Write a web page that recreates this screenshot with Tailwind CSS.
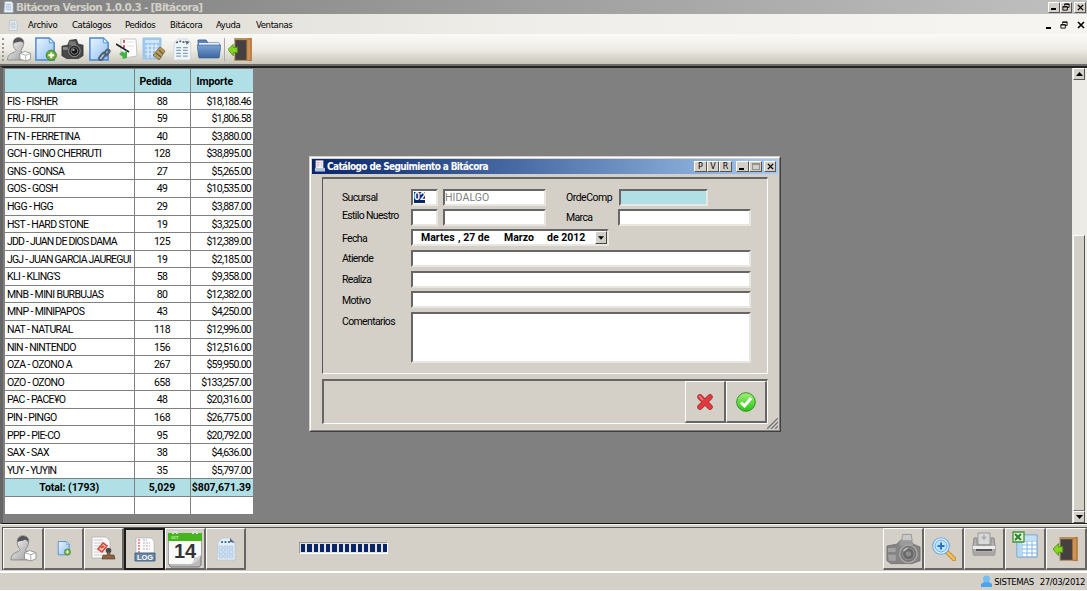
<!DOCTYPE html>
<html lang="es">
<head>
<meta charset="utf-8">
<title>Bitácora Version 1.0.0.3</title>
<script src="https://cdn.jsdelivr.net/npm/@tailwindcss/browser@4"></script>
</head>
<body class="w-[1087px] h-[591px] overflow-hidden bg-[#d4d0c8] font-['Roboto','Liberation_Sans',sans-serif] text-[11px] leading-none text-black">
<svg width="0" height="0" class="absolute">
<defs>
<linearGradient id="skin" x1="0" x2="1" y1="0" y2="1"><stop stop-color="#fff"/><stop offset="1" stop-color="#969696"/></linearGradient>
<linearGradient id="page" x1="0" x2="1" y1="0" y2="1"><stop stop-color="#eaf5ff"/><stop offset="1" stop-color="#8ec0f2"/></linearGradient>
<linearGradient id="folderG" x2="0" y2="1"><stop stop-color="#7da3d4"/><stop offset="1" stop-color="#3a659f"/></linearGradient>
<linearGradient id="wood" x2="1"><stop stop-color="#a98a63"/><stop offset="1" stop-color="#c98b4a"/></linearGradient>
<linearGradient id="green" x2="0" y2="1"><stop stop-color="#a4ef7a"/><stop offset="1" stop-color="#22c80c"/></linearGradient>
<symbol id="person" viewBox="0 0 26 26"><path d="M1 24c0-5 3-7 7-8l2-2C7 11 7 9 7 6c0-7 10-7 11-1 0 4-1 6-3 9l1 2c3 1 5 2 5 8z" fill="url(#skin)" stroke="#888" stroke-width=".9"/><path d="M7.500 7C6 0 16-1 17.500 4v3c-1-2-3-3-4-2-2 1-4 0-6 2z" fill="#555"/><path d="m14 17 5-2 6 2v6l-5 2-6-2z" fill="#fff" stroke="#888" stroke-width=".8"/><path d="m14 17 6 2 5-2M20 19v6" fill="none" stroke="#999" stroke-width=".8"/></symbol>
<symbol id="newpage" viewBox="0 0 24 26"><path d="M2 1h14l5 5v18H2z" fill="url(#page)" stroke="#4a86d0" stroke-width="1.5"/><path d="M16 1v5h5z" fill="#eaf5ff" stroke="#5b93d3"/><circle cx="18" cy="19" r="5.3" fill="#6cac3e" stroke="#41801e"/><path d="M18 16v6m-3-3h6" stroke="#fff" stroke-width="2"/></symbol>
<symbol id="linkpage" viewBox="0 0 24 26"><path d="M2 1h14l5 5v18H2z" fill="url(#page)" stroke="#4a86d0" stroke-width="1.5"/><path d="M16 1v5h5z" fill="#eaf5ff" stroke="#5b93d3"/><path d="m12 21 3-4c2-2 5 0 3 2l-3 4c-2 2-5 0-3-2zm4-3 3-4c2-2 5 0 3 2l-3 4" fill="none" stroke="#526070" stroke-width="2"/></symbol>
<symbol id="camera" viewBox="0 0 24 22"><path d="M1 8l6-1 2-5 7-1 2 5 5 1v11l-5 3H6l-5-3z" fill="#484848" stroke="#2b2b2b" stroke-width=".8"/><path d="M9 3h6l1 4H8z" fill="#777"/><path d="M2 9h5v3H2z" fill="#8a8a8a"/><circle cx="14" cy="13" r="6" fill="#2a2a2a" stroke="#929292"/><circle cx="14" cy="13" r="3.5" fill="#171717" stroke="#777"/><circle cx="13" cy="12" r="1.2" fill="#a8aaae"/></symbol>
<symbol id="graycam" viewBox="0 0 36 32"><path d="M1 13l10-2 4-4 10 0 3 4 7 3v14l-8 3H5l-4-3z" fill="#858585" stroke="#6a6a6a" stroke-width=".8"/><path d="M17 1h9l1 7H16z" fill="#c9c9c9" stroke="#8a8a8a" stroke-width=".8"/><path d="M14 7h12l2 5-14 1z" fill="#9a9a9a"/><path d="M2 15h8v4H2zM2 22h8v6H3z" fill="#a2a2a2"/><circle cx="23" cy="21" r="9" fill="#777" stroke="#a9a9a9" stroke-width="1.5"/><circle cx="23" cy="21" r="6" fill="#686868" stroke="#959595"/><circle cx="23" cy="21" r="2.8" fill="#8e8e8e"/><path d="M18 18l4-3" stroke="#c8c8c8" stroke-width="1.5"/></symbol>
<symbol id="checklist" viewBox="0 0 22 22"><path d="M5 1h15l1 17-13 2-3-5z" fill="#fff" stroke="#c4c4c4"/><path d="M8 2v3m0 2v3" stroke="#dd5c68" stroke-width="2"/><path d="M11 4h7m-7 4h7" stroke="#ddd"/><path d="M0 6l13 8" stroke="#222" stroke-width="1.6"/><path d="m3 16 4-3 1 2 3-3v8l-5 1 1-2z" fill="#3fb544"/></symbol>
<symbol id="calc" viewBox="0 0 24 25"><path d="M1 1h18v21H1z" fill="#9ec7ee" stroke="#9cc4ea"/><path d="M3 3h14v3H3z" fill="#cfe5fa"/><path d="M3 9h14M3 13h14M3 17h9M6 7v14m4-14v14m4-14v8" stroke="#e7f3ff" stroke-width="1.2"/><path d="m11 18 7-8 5 4-6 9z" fill="#b89c61" stroke="#887244"/><path d="m14 16 5 4m-2-7 4 4" stroke="#6f5c34" stroke-width="1.3"/></symbol>
<symbol id="sheet" viewBox="0 0 22 26"><path d="m3 6 4-4h9l4 4v18H2z" fill="#e6eff8" stroke="#b4c4d2" stroke-width=".8"/><path d="M6 6h10" fill="none" stroke="#3f7fc0" stroke-dasharray="2 1.500" stroke-width="2"/><path d="m15 2 5 5-5-1z" fill="#586673"/><path d="M4 10h4v3H4zm5 0h4v3H9zm5 0h4v3h-4zM4 14h4v4H4zm5 0h4v4H9zm5 0h4v4h-4zM4 19h4v3H4zm5 0h4v3H9zm5 0h4v3h-4z" fill="#cfe2f3" stroke="#a3bfd8" stroke-width=".6"/></symbol>
<symbol id="note" viewBox="0 0 22 26"><path d="m3 6 4-4h9l4 4v18H2z" fill="#f1f5f9" stroke="#c6d0da" stroke-width=".8"/><path d="M5 6q4-3 9 0" fill="none" stroke="#456" stroke-dasharray="2 1.500" stroke-width="1.600"/><path d="m14 4 5 1-3 3z" fill="#586673"/><path d="M5 11h5m2 0h5M5 14h5m2 0h5M5 17h5m2 0h5M5 20h5m2 0h5" stroke="#86a3bd" stroke-width="1.3"/></symbol>
<symbol id="folder" viewBox="0 0 24 20"><path d="M1 1h8l2 3h11v14H2z" fill="#5b83b9" stroke="#416ba2"/><path d="M2 4h20v3H2z" fill="#e7f0fb"/><path d="M0 6h24l-2 13H2z" fill="url(#folderG)" stroke="#355d93" stroke-width=".6"/></symbol>
<symbol id="door" viewBox="0 0 24 24"><path d="M6 1h17v22H6z" fill="url(#wood)"/><path d="M7 3h11v19H7z" fill="#464040"/><path d="m18 3 4-2v22l-4-1z" fill="#cd9356" stroke="#8f5b2c" stroke-width=".5"/><path d="m0 12 5-5v3h4v5H5v3z" fill="#86d421" stroke="#4c9412" stroke-width=".8"/></symbol>
<symbol id="stamp" viewBox="0 0 25 25"><path d="M1 1h14l4 4v17H1z" fill="#fafafa" stroke="#aaa" stroke-width=".7"/><path d="M3 4h9M3 7h12M3 10h12M3 13h12M3 16h12M3 19h9" stroke="#ccc"/><path d="m7 13 5-6 4 3-5 6z" fill="#f6c8c0" stroke="#d54334" stroke-width="1.500"/><path d="m10 12 3-2" stroke="#d54334" stroke-width="2"/><circle cx="17.500" cy="14.500" r="2.800" fill="#4b4b4b"/><path d="M16.500 16h2l.5 3h4l1 4H11l1-4h4z" fill="#8b6340" stroke="#533822" stroke-width=".6"/></symbol>
<symbol id="xmark" viewBox="0 0 18 18"><path d="M4 4l10 10M14 4 4 14" stroke="#a62f34" stroke-width="5.5" stroke-linecap="round"/><path d="M4 4l10 10M14 4 4 14" stroke="#e03a40" stroke-width="4" stroke-linecap="round"/><path d="M3.500 3.500l3 3" stroke="#ec8285" stroke-width="1.5" stroke-linecap="round"/></symbol>
<symbol id="ok" viewBox="0 0 20 20"><circle cx="10" cy="10" r="9.3" fill="url(#green)" stroke="#3b8d29"/><path d="M5 10.500 8.500 14 15 6" fill="none" stroke="#fff" stroke-width="3"/></symbol>
<symbol id="mag" viewBox="0 0 24 24"><path d="m14 14 8 8" stroke="#b87a21" stroke-width="4.5" stroke-linecap="round"/><path d="m14 14 8 8" stroke="#f5be51" stroke-width="3" stroke-linecap="round"/><circle cx="9" cy="9" r="7.7" fill="#bde4ff" stroke="#f5faff" stroke-width="2"/><circle cx="9" cy="9" r="8.3" fill="none" stroke="#5b9de0" stroke-width="1.1"/><circle cx="9" cy="9" r="6" fill="none" stroke="#6caeea"/><path d="M9 5.500v7M5.500 9h7" stroke="#2d70c8" stroke-width="2"/></symbol>
<symbol id="printer" viewBox="0 0 26 26"><path d="M7 1h12v12H7z" fill="#d8d8d8" stroke="#999"/><path d="M13 3v5M10.500 5.500h5" stroke="#aaa" stroke-width="1.5"/><path d="M3 6h3v7h14V6h3l1 8v8H2v-8z" fill="#b0b0b0" stroke="#8a8a8a"/><path d="M2 14h22v3H2z" fill="#ececec"/><path d="M5 17h16v2H5z" fill="#555"/><path d="M2 20h22v4H2z" fill="#a6a6a6"/></symbol>
<symbol id="excel" viewBox="0 0 26 28"><path d="M5 4h20v22H5z" fill="#fff" stroke="#5b9ed3"/><path d="M5 10h20M5 14h20M5 18h20M5 22h20M10 10v16m5-16v16m5-16v16" stroke="#82b8e3"/><path d="M6 5h18v4H6z" fill="#c2e0f8"/><path d="M6 10h4v15H6z" fill="#b5d8f3"/><path d="M1 1h11v10H1z" fill="#e4f4dc" stroke="#3f9438" stroke-width="1.3"/><path d="m3 3 6 6m0-6L3 9" stroke="#2d842d" stroke-width="2"/></symbol>
<symbol id="mini" viewBox="0 0 12 12"><path d="M2 0h7l2 2v10H1z" fill="#edf5fc" stroke="#9cb0c5" stroke-width=".8"/><path d="M3 3h6M3 5h6M3 7h6M3 9h6" stroke="#9fb8d0"/></symbol>
<symbol id="log" viewBox="0 0 12 13"><path d="M2 0h8v9H2z" fill="#fff" stroke="#b9b4cc" stroke-width=".6"/><path d="M3 2h3M3 4h3M3 6h3" stroke="#e08a94"/><path d="M7 2h2M7 4h2M7 6h2" stroke="#b5b5d5"/><path d="M1 8h11v4H1z" fill="#b4c4dc"/></symbol>
<symbol id="restore" viewBox="0 0 9 9"><path d="M3 3V1h5v4H6M3 1.500h5" fill="none" stroke="#000"/><path d="M1 4h5v4H1zM1 4.500h5" fill="none" stroke="#000"/></symbol>
<symbol id="close" viewBox="0 0 8 8"><path d="m1 1 6 6m0-6L1 7" stroke="#000" stroke-width="1.6"/></symbol>
</defs>
</svg>

<div class="w-[1087px] h-[591px] flex flex-col">
  <header class="h-[14px] shrink-0 flex items-center pl-[3px] bg-linear-to-r from-[#808080] to-[#c0c0c0]">
    <svg class="w-[11px] h-[12px]"><use href="#mini"/></svg>
    <span class="ml-[2px] whitespace-nowrap font-['DejaVu_Sans'] font-bold text-[10.500px] tracking-[-0.72px] text-[#d4d0c8]">Bitácora Version 1.0.0.3 - [Bitácora]</span>
    <div class="ml-auto flex pr-px">
      <i class="w-[12px] h-[11px] bg-[#d4d0c8] border border-t-white border-l-white border-[#555] flex items-end p-[2px]"><b class="w-[5px] h-[2px] bg-black"></b></i>
      <i class="w-[12px] h-[11px] bg-[#d4d0c8] border border-t-white border-l-white border-[#555] flex items-center justify-center"><svg class="w-[8px] h-[8px]"><use href="#restore"/></svg></i>
      <i class="ml-[2px] w-[12px] h-[11px] bg-[#d4d0c8] border border-t-white border-l-white border-[#555] flex items-center justify-center"><svg class="w-[7px] h-[7px]"><use href="#close"/></svg></i>
    </div>
  </header>

  <nav class="h-[20px] shrink-0 flex items-center pt-[2px] pl-[8px] bg-linear-to-r from-[#dcd9d1] via-[#f0eeea] to-[#f6f5f2] font-['DejaVu_Sans_Condensed','DejaVu_Sans'] text-[9.500px] tracking-[-0.38px]">
    <svg class="w-[10px] h-[11px] opacity-70"><use href="#mini"/></svg>
    <span class="ml-[10px] w-[44px]">Archivo</span><span class="w-[53px]">Catálogos</span><span class="w-[45px]">Pedidos</span><span class="w-[46px]">Bitácora</span><span class="w-[40px]">Ayuda</span><span>Ventanas</span>
    <div class="ml-auto flex items-center gap-[9px] pr-[2px]">
      <b class="w-[5px] h-[2px] bg-black mt-[5px]"></b>
      <svg class="w-[8px] h-[8px]"><use href="#restore"/></svg>
      <svg class="w-[8px] h-[8px]"><use href="#close"/></svg>
    </div>
  </nav>

  <div class="h-[30px] shrink-0 flex items-center bg-linear-to-b from-[#fafaf8] via-[#eeece5] to-[#c9c7ba] pl-[2px]">
    <i class="h-[23px] border-l-2 border-dotted border-[#999] mr-[2px]"></i>
    <svg class="w-[26px] h-[25px]"><use href="#person"/></svg>
    <svg class="ml-[1px] w-[25px] h-[25px]"><use href="#newpage"/></svg>
    <svg class="ml-[3px] w-[23px] h-[22px]"><use href="#camera"/></svg>
    <svg class="ml-[3px] w-[25px] h-[25px]"><use href="#linkpage"/></svg>
    <svg class="ml-[4px] w-[22px] h-[22px]"><use href="#checklist"/></svg>
    <svg class="ml-[4px] w-[24px] h-[25px]"><use href="#calc"/></svg>
    <svg class="ml-[5px] w-[22px] h-[25px]"><use href="#note"/></svg>
    <svg class="ml-[4px] w-[24px] h-[20px]"><use href="#folder"/></svg>
    <i class="ml-[3px] h-[23px] border-l border-[#aaa]"></i>
    <svg class="ml-[3px] w-[25px] h-[25px]"><use href="#door"/></svg>
  </div>

  <main class="relative h-[460px] shrink-0 bg-[#808080] border-t-2 border-t-[#6c6b68] flex">
    <div class="grow border-t-2 border-l-[3px] border-t-[#222] border-l-[#666] border-b border-b-[#111] h-[458px]">
      <table class="ml-[2px] mt-[1px] w-[248px] border-collapse table-fixed bg-white text-[10.500px]">
        <colgroup><col class="w-[129px]"><col class="w-[56px]"><col class="w-[63px]"></colgroup>
        <thead><tr class="h-[23px] bg-[#b0e0e6] tracking-[-0.1px]"><th class="p-0 pt-[3px] pr-[14px] border-r border-[#808080]">Marca</th><th class="p-0 pt-[3px] pr-[13px] border-r border-[#808080]">Pedida</th><th class="p-0 pt-[3px] pr-[14px]">Importe</th></tr></thead>
        <tbody id="rows"></tbody>
      </table>
    </div>
    <aside class="w-[15px] h-[458px] border-t-2 border-[#222] border-b flex flex-col bg-[#ecebe6]">
      <i class="ml-[1px] w-[12px] h-[12px] bg-[#d4d0c8] border border-white border-r-[#555] border-b-[#555] flex items-center justify-center"><svg class="w-[7px] h-[4px]" viewBox="0 0 7 4"><path d="M0 4 3.500 0 7 4z"/></svg></i>
      <i class="mt-auto ml-[1px] w-[12px] h-[276px] bg-[#d4d0c8] border border-white border-r-[#555] border-b-[#777]"></i>
      <i class="ml-[1px] w-[12px] h-[12px] bg-[#d4d0c8] border border-white border-r-[#555] border-b-[#555] flex items-center justify-center"><svg class="w-[7px] h-[4px]" viewBox="0 0 7 4"><path d="M0 0 3.500 4 7 0z"/></svg></i>
    </aside>

    <section class="absolute left-[309px] top-[90px] w-[472px] h-[276px] bg-[#d4d0c8] border border-[#d4d0c8] border-r-[#404040] border-b-[#404040]">
      <div class="h-full border border-white border-r-[#808080] border-b-[#808080] pt-[1px] px-[1px]">
        <div class="h-[15px] flex items-center pl-[2px] pr-[2px] bg-linear-to-r from-[#0a246a] to-[#a6caf0]">
          <svg class="w-[11px] h-[13px]"><use href="#log"/></svg>
          <span class="ml-[2px] whitespace-nowrap font-['DejaVu_Sans_Condensed','DejaVu_Sans'] font-bold text-[10px] tracking-[-0.63px] text-white">Catálogo de Seguimiento a Bitácora</span>
          <div class="ml-auto flex h-[11px] font-['DejaVu_Sans'] text-[8px]">
            <b class="w-[13px] bg-[#d4d0c8] border border-white border-r-[#555] border-b-[#555] flex items-center justify-center font-normal">P</b>
            <b class="w-[12px] bg-[#d4d0c8] border border-white border-r-[#555] border-b-[#555] flex items-center justify-center font-normal">V</b>
            <b class="w-[13px] bg-[#d4d0c8] border border-white border-r-[#555] border-b-[#555] flex items-center justify-center font-normal">R</b>
            <i class="ml-[4px] w-[13px] bg-[#d4d0c8] border border-white border-r-[#555] border-b-[#555] flex items-end pl-[2px] pb-[1px]"><b class="w-[5px] h-[2px] bg-black"></b></i>
            <i class="w-[13px] bg-[#d4d0c8] border border-white border-r-[#555] border-b-[#555] flex items-center justify-center"><b class="w-[8px] h-[7px] border border-t-2 border-[#929088]"></b></i>
            <i class="ml-[2px] w-[12px] bg-[#d4d0c8] border border-white border-r-[#555] border-b-[#555] flex items-center justify-center"><svg class="w-[7px] h-[7px]"><use href="#close"/></svg></i>
          </div>
        </div>
        <div class="ml-[10px] mt-[3px] w-[446px] h-[197px] border border-[#555] border-r-white border-b-white border-t-2 border-t-[#666] pl-[19px] pt-[10px] text-[10.500px] tracking-[-0.65px]">
          <div class="flex h-[20px]"><span class="w-[69px] pt-[4px]">Sucursal</span><div class="w-[27px] h-[17px] bg-white border-2 border-[#666] border-r-[#e8e6e0] border-b-[#e8e6e0] pl-px pt-px"><span class="block w-[11px] h-[11px] bg-[#0a246a] text-white font-bold tracking-[-0.3px]">02</span></div><div class="ml-[5px] w-[103px] h-[17px] bg-white border-2 border-[#666] border-r-[#e8e6e0] border-b-[#e8e6e0] pt-[2px] text-[#808080] tracking-[0.1px]">HIDALGO</div><span class="ml-[19px] w-[54px] pt-[4px] tracking-[-0.9px]"><span class="pl-px tracking-[-0.5px]">OrdeComp</span></span><div class="w-[89px] h-[17px] bg-[#b0e0e6] border-2 border-[#666] border-r-[#e8e6e0] border-b-[#e8e6e0]"></div></div>
          <div class="flex h-[20px]"><span class="w-[69px] pt-[2px]">Estilo Nuestro</span><div class="w-[27px] h-[17px] bg-white border-2 border-[#666] border-r-[#e8e6e0] border-b-[#e8e6e0]"></div><div class="ml-[5px] w-[103px] h-[17px] bg-white border-2 border-[#666] border-r-[#e8e6e0] border-b-[#e8e6e0]"></div><span class="ml-[20px] w-[52px] pt-[4px]">Marca</span><div class="w-[133px] h-[17px] bg-white border-2 border-[#666] border-r-[#e8e6e0] border-b-[#e8e6e0]"></div></div>
          <div class="flex h-[21px]"><span class="w-[69px] pt-[5px]">Fecha</span><div class="w-[198px] h-[17px] bg-white border-2 border-[#666] border-r-[#e8e6e0] border-b-[#e8e6e0] flex items-center pl-[8px] font-bold tracking-[0px] whitespace-nowrap"><span class="w-[37px] pt-px">Martes</span><span class="w-[46px] pt-px">, 27 de</span><span class="w-[43px] pt-px">Marzo</span><span class="pt-px">de 2012</span><i class="ml-auto w-[12px] h-[13px] bg-[#d4d0c8] border border-white border-r-[#444] border-b-[#444] flex items-center justify-center"><svg class="w-[6px] h-[4px]" viewBox="0 0 7 4"><path d="M0 0 3.500 4 7 0z"/></svg></i></div></div>
          <div class="flex h-[21px]"><span class="w-[69px] pt-[4px]">Atiende</span><div class="w-[340px] h-[17px] bg-white border-2 border-[#666] border-r-[#e8e6e0] border-b-[#e8e6e0]"></div></div>
          <div class="flex h-[20px]"><span class="w-[69px] pt-[4px]">Realiza</span><div class="w-[340px] h-[17px] bg-white border-2 border-[#666] border-r-[#e8e6e0] border-b-[#e8e6e0]"></div></div>
          <div class="flex h-[21px]"><span class="w-[69px] pt-[5px]">Motivo</span><div class="w-[340px] h-[17px] bg-white border-2 border-[#666] border-r-[#e8e6e0] border-b-[#e8e6e0]"></div></div>
          <div class="flex"><span class="w-[69px] pt-[5px]">Comentarios</span><div class="w-[340px] h-[51px] bg-white border-2 border-[#666] border-r-[#e8e6e0] border-b-[#e8e6e0]"></div></div>
        </div>
        <div class="ml-[10px] mt-[5px] w-[446px] h-[45px] border-2 border-r border-b border-[#666] border-r-white border-b-white flex justify-end">
          <div class="w-[41px] h-[42px] border border-white border-r-2 border-b-2 border-r-[#666] border-b-[#666] flex items-center justify-center"><svg class="w-[18px] h-[18px]"><use href="#xmark"/></svg></div>
          <div class="w-[41px] h-[42px] border border-white border-r-2 border-b-2 border-r-[#666] border-b-[#666] flex items-center justify-center"><svg class="w-[20px] h-[20px]"><use href="#ok"/></svg></div>
        </div>
      </div>
      <svg class="absolute right-[2px] bottom-[2px] w-[11px] h-[11px]"><path d="M0 11 11 0M4 11l7-7M8 11l3-3" stroke="#777" stroke-width="1.4"/></svg>
    </section>
  </main>

  <footer class="h-[47px] shrink-0 flex pt-[2px] pl-[2px] border-t border-[#f6f5f0] bg-[#d4d0c8]">
    <div class="flex h-[43px] border-t border-l border-[#555] grow">
      <div class="w-[41px] h-[42px] border border-white border-r-2 border-b-2 border-r-[#666] border-b-[#666] flex items-center justify-center"><svg class="w-[27px] h-[27px]"><use href="#person"/></svg></div>
      <div class="w-[40px] h-[42px] border border-white border-r-2 border-b-2 border-r-[#666] border-b-[#666] flex items-center justify-center"><svg class="w-[14px] h-[15px]"><use href="#newpage"/></svg></div>
      <div class="w-[40px] h-[42px] border border-white border-r-2 border-b-2 border-r-[#666] border-b-[#666] flex items-center justify-center"><svg class="w-[25px] h-[25px]"><use href="#stamp"/></svg></div>
      <div class="w-[41px] h-[42px] border-2 border-[#1c1c1c] flex items-center justify-center"><svg class="w-[22px] h-[25px]" viewBox="0 0 22 25"><path d="M2 1h15l3 3v14H2z" fill="#fff" stroke="#aaa" stroke-width=".6"/><path d="M4 3h3m-3 3h3M4 9h3m-3 3h3m-3 3h3" stroke="#e06b73" stroke-dasharray="2 1" stroke-width="1.5"/><path d="M9 3h4m-4 3h7M9 9h7m-7 3h7" stroke="#b5a3bd" stroke-dasharray="2 1"/><path d="M1 16h20v8H1z" fill="#6985a5" stroke="#486682"/><text x="11" y="23" text-anchor="middle" font-size="7.500" font-weight="bold" fill="#fff" font-family="Liberation Sans">LOG</text></svg></div>
      <div class="w-[41px] h-[42px] border border-white border-r-2 border-b-2 border-r-[#666] border-b-[#666] flex items-center justify-center"><svg class="w-[36px] h-[38px] shrink-0" viewBox="0 0 36 38"><path d="M2 6h32v29l-2 2H4l-2-2z" fill="#bbb" stroke="#777"/><path d="M2 10h32v15q-3 7-10 9H2z" fill="#fafafa"/><path d="M34 24q-3 8-11 10 5-2 4-6 4 0 7-4z" fill="#ccc"/><path d="M1 3h34v8H1z" fill="#45b51e"/><path d="M6 4V3q2-3 4 0v1m16 0V3q2-3 4 0v1" fill="none" stroke="#ddd" stroke-width="2"/><text x="4" y="8.500" font-size="3.500" font-weight="bold" fill="#caffb1" font-family="Liberation Sans">OCT</text><text x="18" y="28" text-anchor="middle" font-size="20" font-weight="bold" fill="#333" font-family="Liberation Sans">14</text></svg></div>
      <div class="w-[40px] h-[42px] border border-white border-r-2 border-b-2 border-r-[#666] border-b-[#666] flex items-center justify-center"><svg class="w-[22px] h-[26px]"><use href="#sheet"/></svg></div>
      <div class="ml-[53px] mt-[14px] w-[89px] h-[12px] border border-[#999] border-r-white border-b-white bg-[#e5e3de] p-[1px] flex gap-[2px] overflow-hidden" id="progress"></div>
      <div class="ml-auto flex">
        <div class="w-[41px] h-[42px] border border-white border-r-2 border-b-2 border-r-[#666] border-b-[#666] flex items-center justify-center"><svg class="w-[35px] h-[32px]"><use href="#graycam"/></svg></div>
        <div class="w-[40px] h-[42px] border border-white border-r-2 border-b-2 border-r-[#666] border-b-[#666] flex items-center justify-center"><svg class="w-[24px] h-[24px]"><use href="#mag"/></svg></div>
        <div class="w-[41px] h-[42px] border border-white border-r-2 border-b-2 border-r-[#666] border-b-[#666] flex items-start pt-[3px] justify-center"><svg class="w-[26px] h-[26px]"><use href="#printer"/></svg></div>
        <div class="w-[41px] h-[42px] border border-white border-r-2 border-b-2 border-r-[#666] border-b-[#666] flex items-start pt-[2px] justify-center"><svg class="w-[26px] h-[28px]"><use href="#excel"/></svg></div>
        <div class="w-[41px] h-[42px] border border-white border-r-2 border-b-2 border-r-[#666] border-b-[#666] flex items-center justify-center"><svg class="w-[26px] h-[26px]"><use href="#door"/></svg></div>
      </div>
    </div>
  </footer>
  <div class="h-[20px] shrink-0 border-t-2 border-b border-white flex items-center justify-end pr-[2px] font-['DejaVu_Sans_Condensed','DejaVu_Sans'] text-[9.500px] tracking-[-0.4px]">
    <svg class="w-[13px] h-[13px] mr-[1px]" viewBox="0 0 13 13"><path d="M1 12V9l3-2h5l3 2v3z" fill="#4ba3ea"/><circle cx="6.500" cy="4" r="3.500" fill="#72bdf6"/></svg>
    <span>SISTEMAS</span><span class="ml-[6px]">27/03/2012</span>
  </div>
</div>
<script>
const data = [
["FIS - FISHER","88","$18,188.46"],["FRU - FRUIT","59","$1,806.58"],["FTN - FERRETINA","40","$3,880.00"],["GCH - GINO CHERRUTI","128","$38,895.00"],["GNS - GONSA","27","$5,265.00"],["GOS - GOSH","49","$10,535.00"],["HGG - HGG","29","$3,887.00"],["HST - HARD STONE","19","$3,325.00"],["JDD - JUAN DE DIOS DAMA","125","$12,389.00"],["JGJ - JUAN GARCIA JAUREGUI","19","$2,185.00"],["KLI - KLING'S","58","$9,358.00"],["MNB - MINI BURBUJAS","80","$12,382.00"],["MNP - MINIPAPOS","43","$4,250.00"],["NAT - NATURAL","118","$12,996.00"],["NIN - NINTENDO","156","$12,516.00"],["OZA - OZONO A","267","$59,950.00"],["OZO - OZONO","658","$133,257.00"],["PAC - PACE¥O","48","$20,316.00"],["PIN - PINGO","168","$26,775.00"],["PPP - PIE-CO","95","$20,792.00"],["SAX - SAX","38","$4,636.00"],["YUY - YUYIN","35","$5,797.00"]];
document.getElementById("rows").innerHTML = data.map(r =>
`<tr class="h-[17.580px] border-t border-[#808080] whitespace-nowrap"><td class="p-0 pt-[2px] pl-[2px] border-r border-[#808080] ${r[0].length > 22 ? "tracking-[-0.8px]" : "tracking-[-0.62px]"}">${r[0]}</td><td class="p-0 pt-[2px] text-center border-r border-[#808080] tracking-[-0.6px]">${r[1]}</td><td class="p-0 pt-[2px] pr-[2px] text-right tracking-[-0.75px]">${r[2]}</td></tr>`).join("") +
`<tr class="h-[17.580px] border-t border-[#808080] bg-[#b0e0e6] font-bold tracking-[-0.05px]"><td class="p-0 pt-[2px] text-center border-r border-[#808080]">Total: (1793)</td><td class="p-0 pt-[2px] text-center border-r border-[#808080]">5,029</td><td class="p-0 pt-[2px] pr-[2px] text-right">$807,671.39</td></tr><tr class="h-[17.580px] border-t border-[#808080]"><td class="border-r border-[#808080] p-0"></td><td class="border-r border-[#808080] p-0"></td><td class="p-0"></td></tr>`;
document.getElementById("progress").innerHTML = '<i class="w-[4.300px] h-[8px] shrink-0 bg-[#0a246a]"></i>'.repeat(14);
</script>
</body>
</html>
